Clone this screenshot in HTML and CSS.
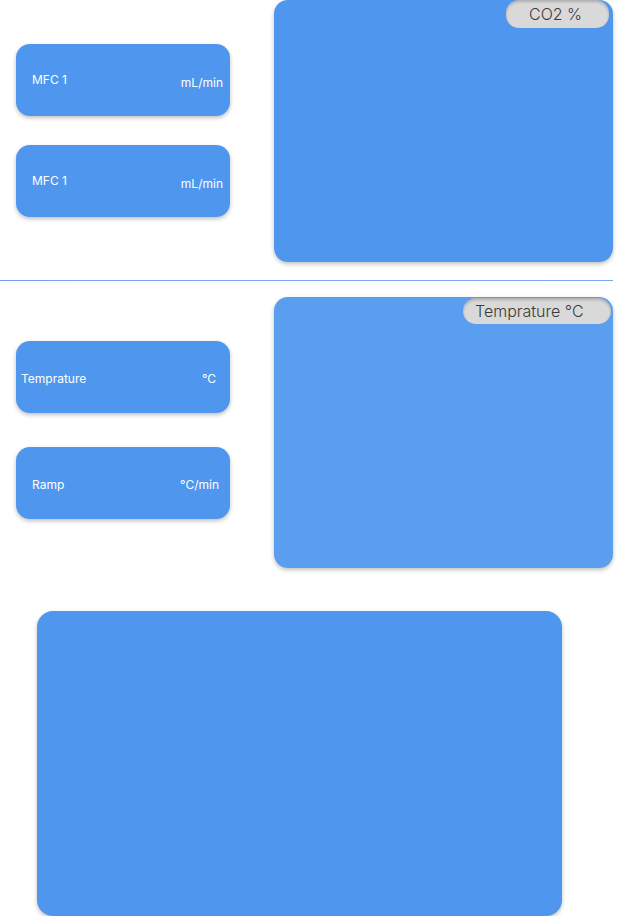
FILE: index.html
```html
<!DOCTYPE html>
<html>
<head>
    <title>Reactor Control</title>
    <link rel="stylesheet" href="styles.css">
</head>
<body>
    <div class="section first">
        <div class="inputs">
            <div class="input-card">
                <span class="label">MFC 1</span>
                <span class="unit low">mL/min</span>
            </div>
            <div class="input-card">
                <span class="label">MFC 1</span>
                <span class="unit low">mL/min</span>
            </div>
        </div>
        <div class="chart">
            <div class="chart-title co2">CO2 %</div>
        </div>
    </div>

    <hr class="divider">

    <div class="section second">
        <div class="inputs">
            <div class="input-card">
                <span class="label wide">Temprature</span>
                <span class="unit deg">°C</span>
            </div>
            <div class="input-card">
                <span class="label">Ramp</span>
                <span class="unit ramp">°C/min</span>
            </div>
        </div>
        <div class="chart light">
            <div class="chart-title temp">Temprature °C</div>
        </div>
    </div>

    <div class="big-chart"></div>
</body>
</html>
```

FILE: styles.css
```css
body {
    margin: 0;
    font-family: Inter, "Noto Sans", sans-serif;
    background: #fff;
}
.section {
    display: flex;
    padding-left: 16px;
}
.inputs {
    width: 214px;
    display: flex;
    flex-direction: column;
}
.first .inputs {
    padding-top: 44px;
    gap: 29px;
}
.second .inputs {
    padding-top: 44px;
    gap: 34px;
}
.input-card {
    height: 72px;
    background: #4f97ee;
    border-radius: 14px;
    box-shadow: 0 2px 4px rgba(0, 0, 0, 0.25);
    display: flex;
    align-items: center;
    justify-content: space-between;
    padding: 0 7px 0 16px;
    color: #fff;
    font-size: 12px;
}
.first .label {
    margin-top: -1px;
}
.second .input-card span {
    margin-top: 2px;
}
.label.wide {
    margin-left: -11px;
}
.unit.low {
    margin-top: 4px;
}
.unit.deg {
    margin-right: 7px;
}
.unit.ramp {
    margin-right: 4px;
}
.chart {
    margin-left: 44px;
    width: 339px;
    height: 262px;
    background: #4f97ee;
    border-radius: 14px;
    box-shadow: 0 2px 4px rgba(0, 0, 0, 0.25);
    display: flex;
    justify-content: flex-end;
    align-items: flex-start;
}
.chart.light {
    background: #5a9eef;
    height: 271px;
}
.chart-title {
    background: #d9d9d9;
    color: #3a3a3a;
    font-weight: 300;
    font-size: 16px;
    height: 26px;
    line-height: 26px;
    border-radius: 13px;
    box-shadow: inset 0 2px 3px rgba(0, 0, 0, 0.2);
}
.co2 {
    width: 80px;
    padding-left: 23px;
    margin-right: 4px;
    height: 28px;
    line-height: 28px;
}
.temp {
    width: 136px;
    padding-left: 12px;
    margin-right: 2px;
    margin-top: 1px;
}
.divider {
    border: none;
    height: 1px;
    width: 613px;
    margin: 18px 0 16px 0;
    background: linear-gradient(to right, #7f9cf5, #7fa6f5);
}
.big-chart {
    margin: 43px 0 0 37px;
    width: 525px;
    height: 305px;
    background: #4f97ee;
    border-radius: 16px;
    box-shadow: 0 2px 4px rgba(0, 0, 0, 0.25);
}
```
